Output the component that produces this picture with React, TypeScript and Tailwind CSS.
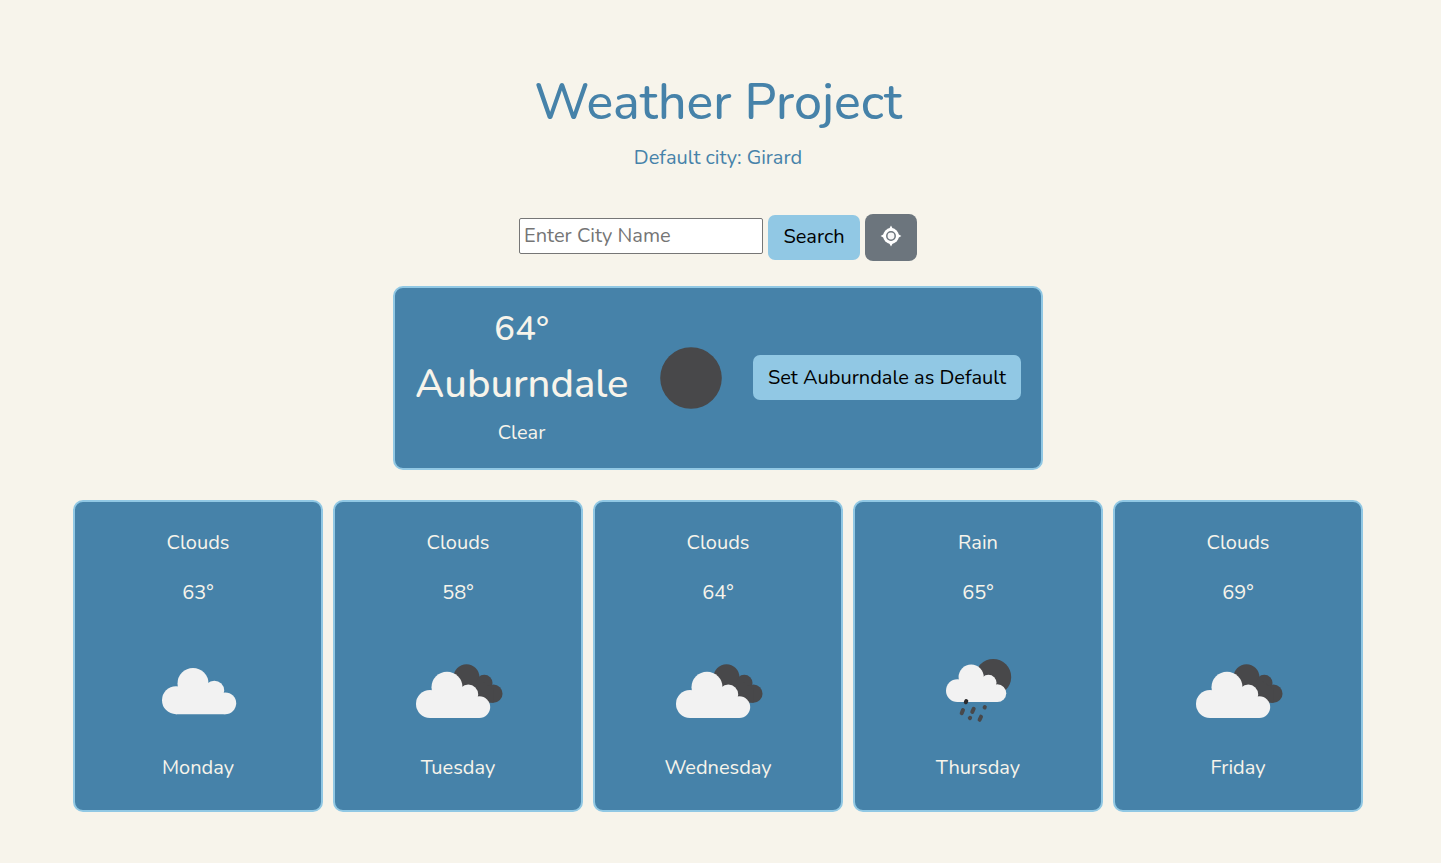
import React from "react";

type Sky = "cloud" | "overcast" | "rain";

function CloudShape() {
  return (
    <>
      <circle cx="14" cy="32.2" r="14" />
      <circle cx="31" cy="15.5" r="15.5" />
      <circle cx="52.3" cy="22.6" r="9.9" />
      <circle cx="63.3" cy="35.3" r="10.9" />
      <path d="M14 20 H50 L63.3 30 V46.2 H14 Z" />
    </>
  );
}

function SkyIcon({ sky }: { sky: Sky }) {
  if (sky === "cloud") {
    return (
      <svg width="100" height="100" viewBox="0 0 100 100">
        <g fill="#f2f2f2" transform="translate(14 28)">
          <CloudShape />
        </g>
      </svg>
    );
  }
  if (sky === "overcast") {
    return (
      <svg width="100" height="100" viewBox="0 0 100 100">
        <g fill="#48484a" transform="translate(32.6 24.2) scale(0.835)">
          <CloudShape />
        </g>
        <g fill="#f2f2f2" transform="translate(8 31.8)">
          <CloudShape />
        </g>
      </svg>
    );
  }
  return (
    <svg width="100" height="100" viewBox="0 0 100 100">
      <circle cx="65.2" cy="37" r="18" fill="#48484a" />
      <g fill="#f2f2f2" transform="translate(18 24.5) scale(0.812)">
        <CloudShape />
      </g>
      <g stroke="#48484a" strokeWidth="4" strokeLinecap="round">
        <path d="M38.3 61 L37.8 62.3" stroke="#2b2b2d" />
        <path d="M35 70 L33.7 73.2" />
        <path d="M45.7 68.8 L44.3 71.9" />
        <path d="M56.8 67.1 L56.6 67.5" />
        <path d="M42.1 77.8 L41.9 78.2" />
        <path d="M53 76.7 L51.6 79.8" />
      </g>
    </svg>
  );
}

const forecast: { label: string; temp: string; sky: Sky; day: string }[] = [
  { label: "Clouds", temp: "63°", sky: "cloud", day: "Monday" },
  { label: "Clouds", temp: "58°", sky: "overcast", day: "Tuesday" },
  { label: "Clouds", temp: "64°", sky: "overcast", day: "Wednesday" },
  { label: "Rain", temp: "65°", sky: "rain", day: "Thursday" },
  { label: "Clouds", temp: "69°", sky: "overcast", day: "Friday" },
];

export default function App() {
  return (
    <div className="h-[863px] overflow-hidden bg-[#f7f4eb] font-['Nunito','Lato',sans-serif] text-[20px] leading-[30px] text-[#4682a9]">
      <main className="flex w-[1436px] flex-col items-center pt-[73px]">
        <h1 className="text-[50px] leading-[60px] font-medium">Weather Project</h1>
        <p className="mt-[10px]">Default city: Girard</p>

        <form className="mt-[40px] flex h-[49px] items-center gap-[5px]" onSubmit={(e) => e.preventDefault()}>
          <input
            className="mb-[4px] h-[36px] w-[244px] rounded-[2px] border border-[#767676] bg-white px-1 text-[20px] text-black placeholder:text-[#757575]"
            placeholder="Enter City Name"
          />
          <button className="h-[45px] w-[92px] rounded-[7px] bg-[#91c8e4] pb-[2px] text-black">Search</button>
          <button className="flex h-[47px] w-[52px] items-center justify-center rounded-[8px] bg-[#6c757d]" aria-label="Use my location">
            <svg width="22" height="22" viewBox="0 0 22 22" className="mb-[4px]">
              <path d="M11 0.6 L13.2 4.5 H8.8 Z M11 21.4 L8.8 17.5 H13.2 Z M0.6 11 L4.5 8.8 V13.2 Z M21.4 11 L17.5 13.2 V8.8 Z" fill="#fff" />
              <circle cx="11" cy="11" r="7.9" fill="#fff" />
              <circle cx="11" cy="11" r="4.2" fill="#f7f7f8" stroke="#6c757d" strokeWidth="1.5" />
            </svg>
          </button>
        </form>

        <section className="mt-[24px] flex h-[184px] w-[650px] items-center rounded-[10px] border-2 border-[#91c8e4] bg-[#4682a9] px-[20px] text-[#f7f4eb]">
          <div className="w-[213px] text-center">
            <h3 className="text-[35px] leading-[42px] font-medium">64°</h3>
            <h2 className="mt-[10px] text-[40px] leading-[48px] font-medium whitespace-nowrap">Auburndale</h2>
            <p className="mt-[10px]">Clear</p>
          </div>
          <svg width="100" height="100" viewBox="0 0 100 100" className="ml-[13px]">
            <circle cx="50" cy="50" r="30.8" fill="#48484a" />
          </svg>
          <button className="mb-px ml-[12px] h-[45px] w-[268px] rounded-[7px] bg-[#91c8e4] text-black">Set Auburndale as Default</button>
        </section>

        <section className="mt-[30px] flex gap-[10px]">
          {forecast.map((f) => (
            <article key={f.day} className="flex h-[312px] w-[250px] flex-col items-center rounded-[10px] border-2 border-[#91c8e4] bg-[#4682a9] pt-[26px] text-[#f7f4eb]">
              <p>{f.label}</p>
              <p className="mt-[20px]">{f.temp}</p>
              <div className="mt-[32px]">
                <SkyIcon sky={f.sky} />
              </div>
              <p className="mt-[13px]">{f.day}</p>
            </article>
          ))}
        </section>
      </main>
    </div>
  );
}
